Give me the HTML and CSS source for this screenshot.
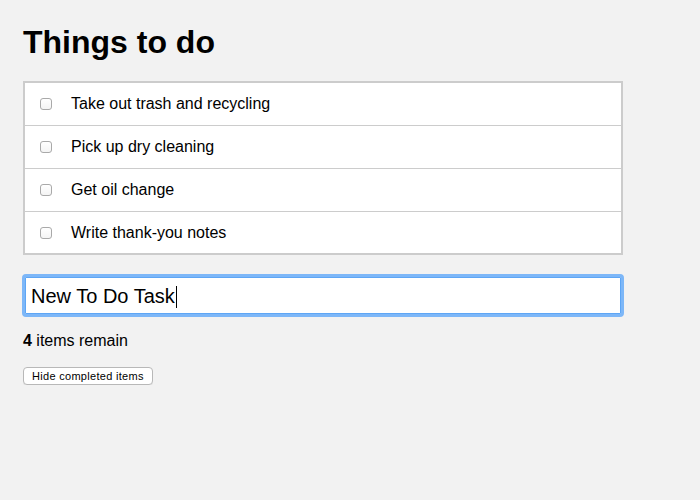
FILE: index.html
```html
<!DOCTYPE html>
<html lang="en">
<head>
<meta charset="utf-8">
<title>Things to do</title>
<link rel="stylesheet" href="styles.css">
</head>
<body>
<main class="app">
  <h1 class="title">Things to do</h1>
  <ul class="todo-list">
    <li class="todo-item"><input type="checkbox" class="todo-check"><span class="todo-text">Take out trash and recycling</span></li>
    <li class="todo-item"><input type="checkbox" class="todo-check"><span class="todo-text">Pick up dry cleaning</span></li>
    <li class="todo-item"><input type="checkbox" class="todo-check"><span class="todo-text">Get oil change</span></li>
    <li class="todo-item"><input type="checkbox" class="todo-check"><span class="todo-text">Write thank-you notes</span></li>
  </ul>
  <div class="new-task" role="textbox" aria-label="New task"><span class="new-task-text">New To Do Task</span><span class="caret"></span></div>
  <p class="remaining"><strong>4</strong> items remain</p>
  <button class="hide-btn" type="button">Hide completed items</button>
</main>
</body>
</html>
```
FILE: styles.css
```css
html, body {
  margin: 0;
  padding: 0;
  background: #f2f2f2;
}
body {
  font-family: "Liberation Sans", Arial, Helvetica, sans-serif;
  color: #000;
}
.app {
  width: 600px;
  padding: 24px 23px 0;
}
.title {
  margin: 0 0 20px;
  font-size: 32px;
  font-weight: bold;
  line-height: 37px;
}
.todo-list {
  list-style: none;
  margin: 0;
  padding: 0;
  background: #fff;
  border: 2px solid #cccccc;
}
.todo-item {
  display: flex;
  align-items: center;
  height: 42px;
  padding: 0 15px;
  border-bottom: 1px solid #cccccc;
  font-size: 16px;
}
.todo-item:last-child {
  border-bottom: none;
  height: 41px;
}
.todo-check {
  appearance: none;
  -webkit-appearance: none;
  margin: 0 19px 0 0;
  width: 12px;
  height: 12px;
  border: 1px solid #a9a9a9;
  border-radius: 3px;
  background: linear-gradient(#ffffff, #f4f4f4);
  flex: none;
}
.todo-text {
  line-height: 18px;
}
.new-task {
  display: flex;
  align-items: center;
  margin-top: 19px;
  height: 37px;
  margin-left: -1px;
  margin-right: -1px;
  padding: 2px 6px 0;
  box-sizing: content-box;
  background: #fff;
  border: 3px solid #7db7f8;
  border-radius: 4px;
  box-shadow: inset 0 0 0 1px #5ea6f5;
  font-size: 20px;
}
.new-task {
  height: 35px;
}
.new-task-text {
  line-height: 23px;
}
.caret {
  display: inline-block;
  width: 1px;
  height: 22px;
  background: #000;
  margin-left: 1px;
}
.remaining {
  margin: 15px 0 0;
  font-size: 16px;
  line-height: 18px;
}
.remaining strong {
  font-weight: bold;
}
.hide-btn {
  display: block;
  margin-top: 17px;
  height: 18px;
  padding: 0 8px;
  font-family: "Liberation Sans", Arial, sans-serif;
  font-size: 11px;
  letter-spacing: 0.3px;
  line-height: 16px;
  color: #000;
  background: #fff;
  border: 1px solid #b8b8b8;
  border-radius: 4px;
  box-shadow: 0 1px 0 rgba(0,0,0,0.05);
}
```
